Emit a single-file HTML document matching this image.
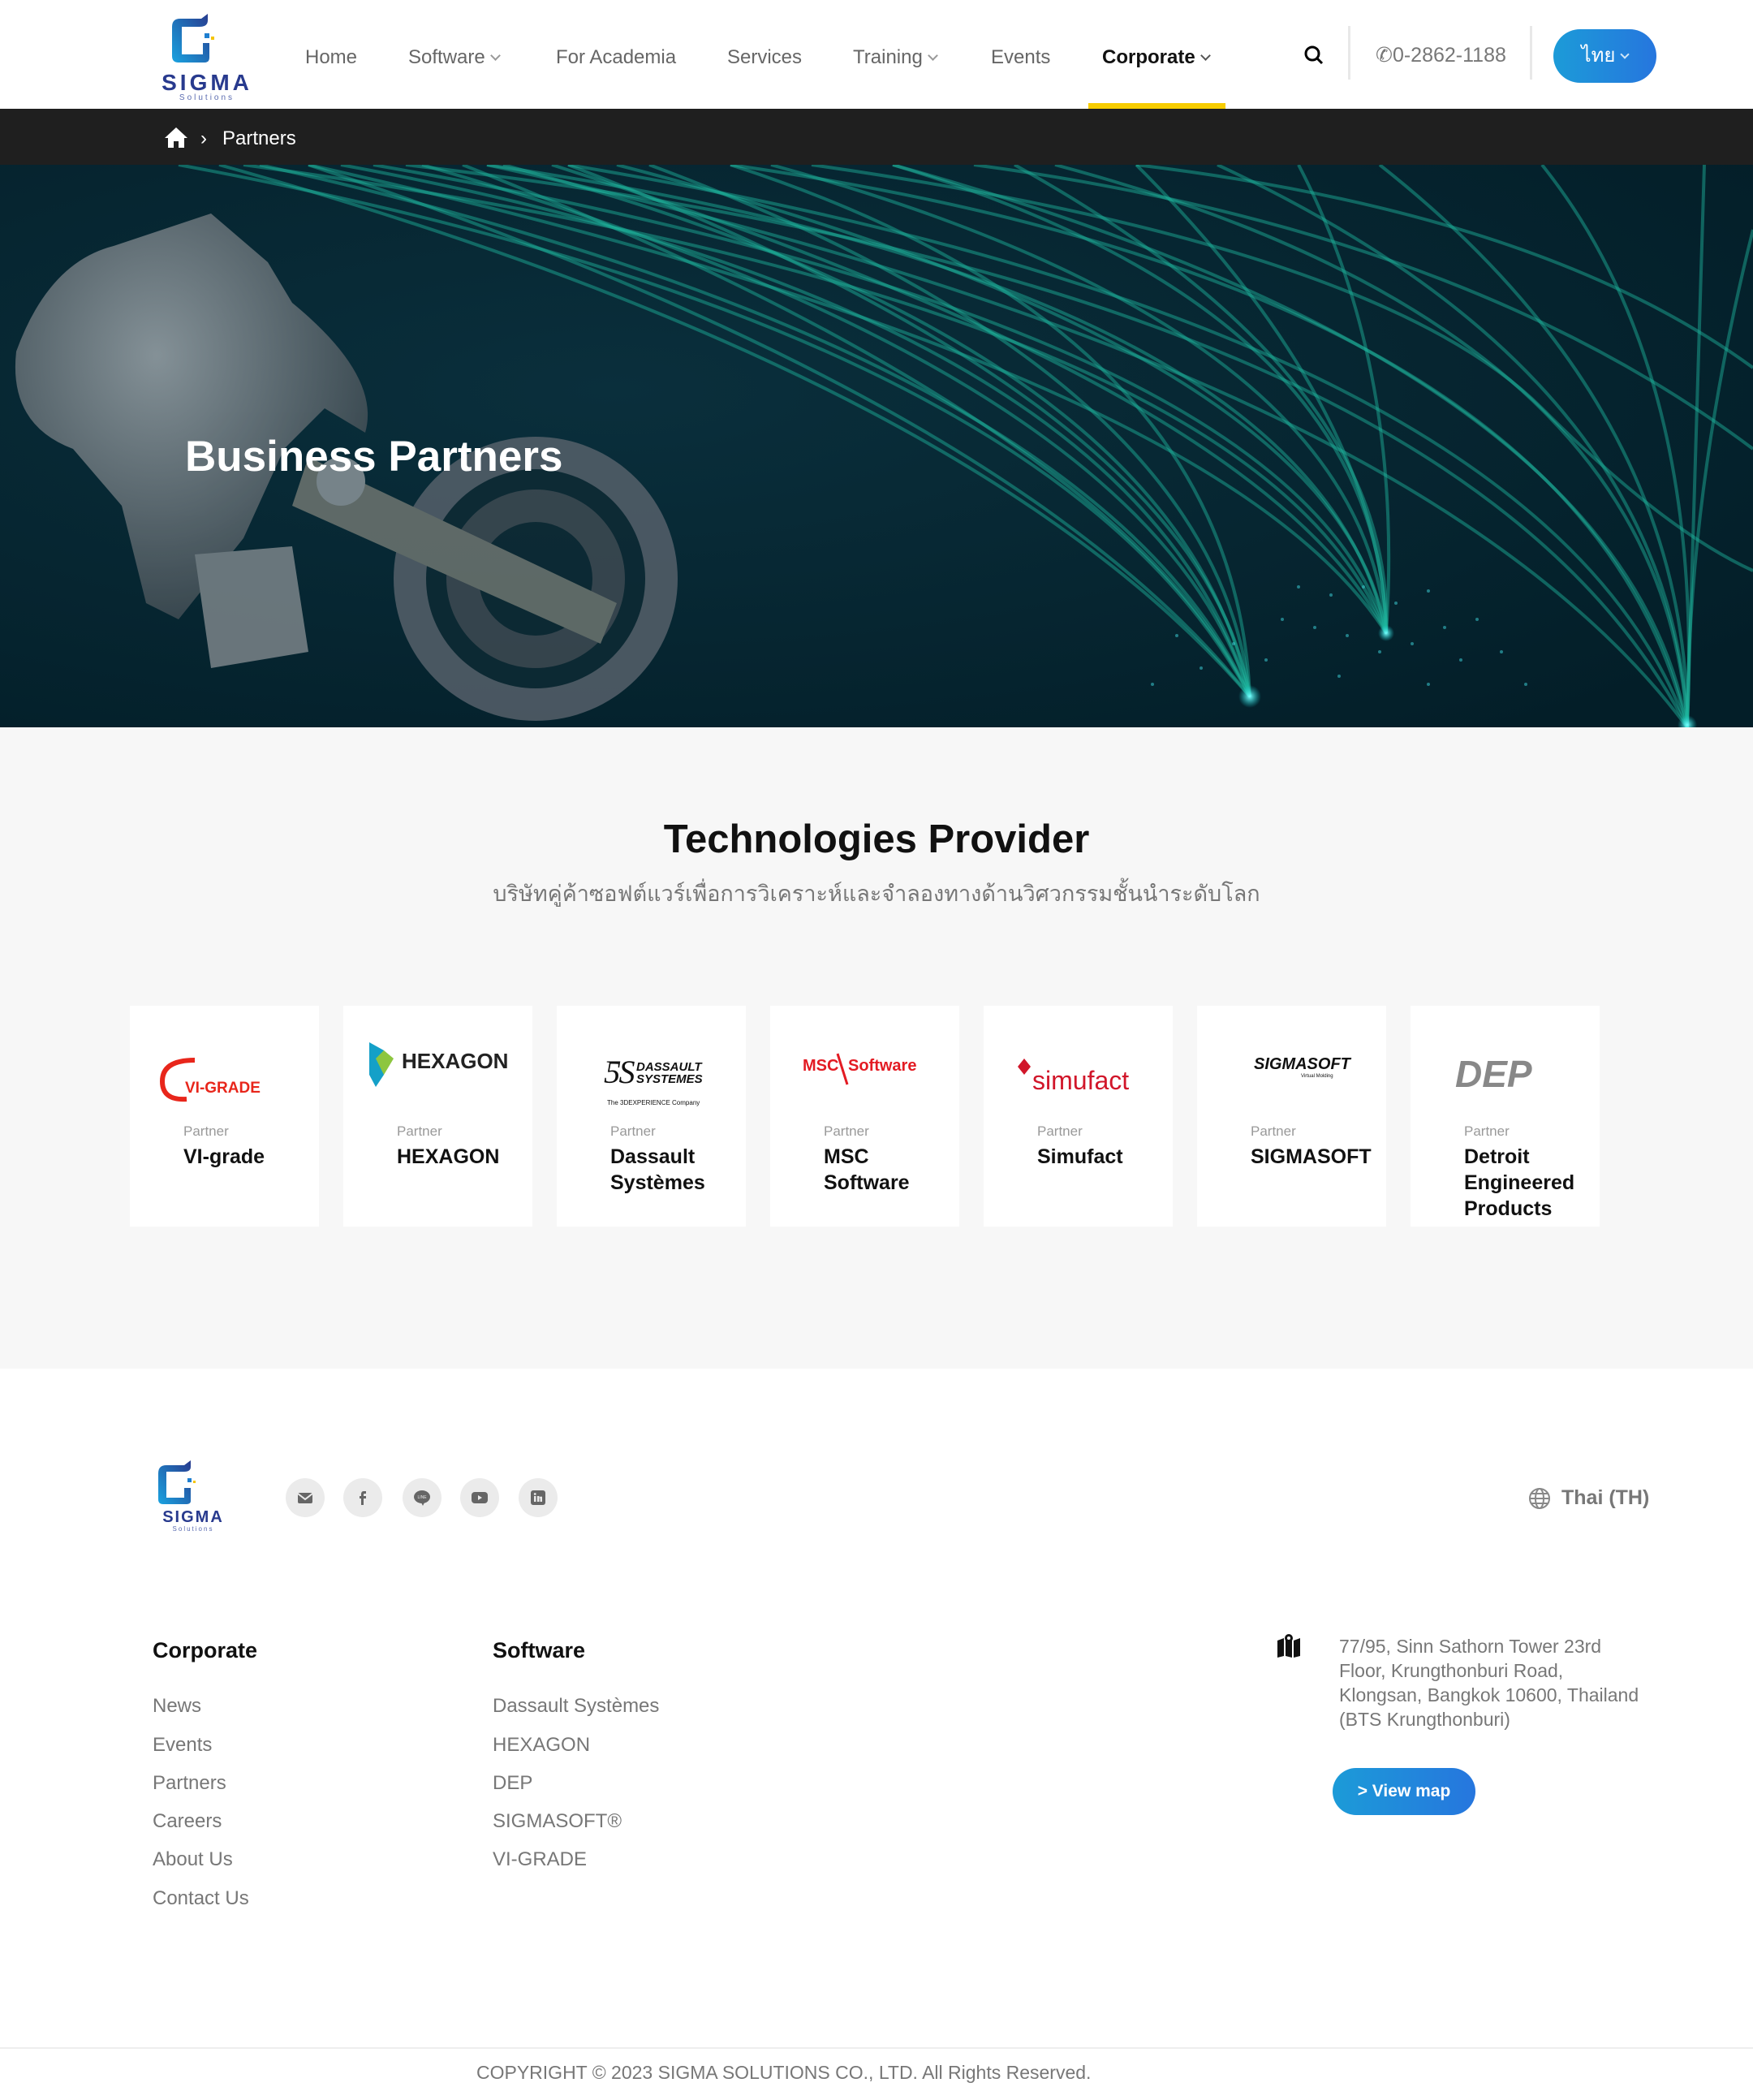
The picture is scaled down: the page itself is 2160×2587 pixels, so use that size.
<!DOCTYPE html>
<html><head><meta charset="utf-8">
<style>
*{margin:0;padding:0;box-sizing:border-box}
body{width:2160px;height:2587px;position:relative;background:#fff;font-family:"Liberation Sans","Noto Sans CJK SC",sans-serif;overflow:hidden}
.a{position:absolute;white-space:nowrap}
.nav{font-size:24px;color:#666;top:57px}
.chev{display:inline-block;width:9px;height:9px;border-right:2px solid #999;border-bottom:2px solid #999;transform:rotate(45deg);margin-left:8px;position:relative;top:-5px}
.card{position:absolute;top:1239px;width:233px;height:272px;background:#fff}
.card .p{position:absolute;left:66px;top:145px;font-size:17px;color:#999}
.card .n{position:absolute;left:66px;top:170px;font-size:25px;font-weight:bold;color:#111;line-height:32px;white-space:normal;width:160px}
.card .lg{position:absolute;left:20px;top:45px;width:200px;height:90px}
.fl{font-size:24px;color:#777}
.soc{position:absolute;top:1821px;width:48px;height:48px;border-radius:50%;background:#ebebeb}
.soc svg{position:absolute;left:12px;top:12px}
</style></head><body>

<svg class="a" style="left:195px;top:15px" width="120" height="110" viewBox="0 0 120 110">
<defs><linearGradient id="lg1" x1="0" y1="1" x2="1" y2="0"><stop offset="0" stop-color="#1aa3e0"/><stop offset="1" stop-color="#283a8e"/></linearGradient></defs>
<path d="M17 18 Q17 8 27 8 L53 8 L61 2 L61 10 Q61 18 51 18 L29 18 L29 52 L55 52 L55 38 L63 38 L63 56 Q63 62 57 62 L25 62 Q17 62 17 54 Z" fill="url(#lg1)"/>
<rect x="57" y="26" width="6" height="6" fill="#1f7fd0"/><rect x="65" y="30" width="4" height="4" fill="#f5c400"/>
<text x="60" y="96" text-anchor="middle" font-size="28" font-weight="bold" fill="#283a8e" font-family="Liberation Sans" letter-spacing="4">SIGMA</text>
<text x="60" y="108" text-anchor="middle" font-size="10" fill="#5a6bb0" font-family="Liberation Sans" letter-spacing="3">Solutions</text>
</svg>
<div class="a nav" style="left:376px">Home</div>
<div class="a nav" style="left:503px">Software<span class="chev"></span></div>
<div class="a nav" style="left:685px">For Academia</div>
<div class="a nav" style="left:896px">Services</div>
<div class="a nav" style="left:1051px">Training<span class="chev"></span></div>
<div class="a nav" style="left:1221px">Events</div>
<div class="a nav" style="left:1358px;color:#111;font-weight:bold">Corporate<span class="chev" style="border-color:#555"></span></div>
<div class="a" style="left:1341px;top:127px;width:169px;height:7px;background:#f7cd00"></div>
<svg class="a" style="left:1606px;top:55px" width="26" height="26" viewBox="0 0 26 26"><circle cx="11" cy="11" r="8" stroke="#000" stroke-width="3" fill="none"/><path d="M17 17 L23 23" stroke="#000" stroke-width="3"/></svg>
<div class="a" style="left:1661px;top:32px;width:3px;height:66px;background:#e8e8e8"></div>
<div class="a" style="left:1695px;top:53px;font-size:25px;color:#777">&#9990;0-2862-1188</div>
<div class="a" style="left:1885px;top:32px;width:3px;height:66px;background:#e8e8e8"></div>
<div class="a" style="left:1914px;top:36px;width:127px;height:66px;border-radius:33px;background:linear-gradient(90deg,#1c9bd8,#2676de);color:#fff;font-size:24px;text-align:center;line-height:66px">ไทย<span class="chev" style="border-color:#cfe6f8;width:8px;height:8px"></span></div>

<div class="a" style="left:0;top:134px;width:2160px;height:69px;background:#1f1f1f"></div>
<svg class="a" style="left:201px;top:155px" width="32" height="28" viewBox="0 0 32 28"><path d="M16 2 L30 15 L26 15 L26 27 L19 27 L19 19 L13 19 L13 27 L6 27 L6 15 L2 15 Z" fill="#fff"/></svg>
<div class="a" style="left:247px;top:157px;font-size:24px;color:#fff">&#8250;</div>
<div class="a" style="left:274px;top:157px;font-size:24px;color:#fff">Partners</div>

<svg class="a" style="left:0;top:203px" width="2160" height="693" viewBox="0 0 2160 693">
<defs>
<radialGradient id="bg" cx="0.35" cy="0.4" r="0.8"><stop offset="0" stop-color="#0a2f3c"/><stop offset="1" stop-color="#031e28"/></radialGradient>
<radialGradient id="glow" cx="0.5" cy="0.5" r="0.5"><stop offset="0" stop-color="#7ff"/><stop offset="1" stop-color="#1cc" stop-opacity="0"/></radialGradient>
<radialGradient id="met" cx="0.4" cy="0.35" r="0.7"><stop offset="0" stop-color="#9aa3a8"/><stop offset="1" stop-color="#3b474e"/></radialGradient>
</defs>
<rect width="2160" height="693" fill="url(#bg)"/>
<g fill="none" stroke="#1fb8a0" stroke-opacity="0.45" stroke-width="4">
<path d="M220 0 Q1300 200 1540 655"/><path d="M320 0 Q1350 230 1540 655"/><path d="M420 0 Q1400 180 1540 655"/><path d="M520 0 Q1420 260 1540 655"/><path d="M620 0 Q1450 220 1540 655"/><path d="M700 0 Q1480 300 1540 655"/><path d="M800 0 Q1500 260 1540 655"/><path d="M380 0 Q1250 290 1540 655"/><path d="M900 0 Q1520 200 1540 655"/><path d="M270 0 Q1200 260 1540 655"/><path d="M570 0 Q1380 320 1540 655"/>
<path d="M300 0 Q1550 170 1708 577"/><path d="M460 0 Q1600 200 1708 577"/><path d="M600 0 Q1620 150 1708 577"/><path d="M760 0 Q1650 230 1708 577"/><path d="M950 0 Q1680 200 1708 577"/><path d="M1100 0 Q1700 180 1708 577"/><path d="M1250 0 Q1720 260 1708 577"/><path d="M1400 0 Q1700 300 1708 577"/><path d="M1600 0 Q1730 250 1708 577"/><path d="M380 0 Q1500 250 1708 577"/><path d="M680 0 Q1560 280 1708 577"/>
<path d="M500 0 Q1800 150 2079 693"/><path d="M700 0 Q1900 200 2079 693"/><path d="M900 0 Q1950 150 2079 693"/><path d="M1100 0 Q2000 250 2079 693"/><path d="M1300 0 Q2050 200 2079 693"/><path d="M1500 0 Q2060 260 2079 693"/><path d="M1700 0 Q2080 300 2079 693"/><path d="M1900 0 Q2100 250 2079 693"/><path d="M2100 0 Q2090 350 2079 693"/><path d="M2160 80 Q2080 400 2079 693"/><path d="M600 0 Q1750 250 2079 693"/>
<path d="M1000 0 Q1700 100 1900 300 Q2050 450 2160 500"/><path d="M1200 0 Q1800 80 2160 350"/><path d="M1400 0 Q1900 60 2160 250"/>
</g>
<g fill="#3fd9e0" opacity="0.5">
<circle cx="1600" cy="520" r="2"/><circle cx="1640" cy="530" r="2"/><circle cx="1680" cy="520" r="2"/><circle cx="1720" cy="540" r="2"/><circle cx="1760" cy="525" r="2"/><circle cx="1580" cy="560" r="2"/><circle cx="1620" cy="570" r="2"/><circle cx="1660" cy="580" r="2"/><circle cx="1700" cy="600" r="2"/><circle cx="1740" cy="590" r="2"/><circle cx="1780" cy="570" r="2"/><circle cx="1820" cy="560" r="2"/><circle cx="1800" cy="610" r="2"/><circle cx="1560" cy="610" r="2"/><circle cx="1520" cy="590" r="2"/><circle cx="1480" cy="620" r="2"/><circle cx="1450" cy="580" r="2"/><circle cx="1850" cy="600" r="2"/><circle cx="1650" cy="630" r="2"/><circle cx="1760" cy="640" r="2"/><circle cx="1420" cy="640" r="2"/><circle cx="1880" cy="640" r="2"/>
</g>
<circle cx="1540" cy="655" r="14" fill="url(#glow)"/><circle cx="1708" cy="577" r="10" fill="url(#glow)"/><circle cx="2079" cy="690" r="12" fill="url(#glow)"/>
<g opacity="0.85">
<circle cx="660" cy="510" r="175" fill="#55606a"/><circle cx="660" cy="510" r="135" fill="#0e2a34"/><circle cx="660" cy="510" r="110" fill="#3e4a52"/><circle cx="660" cy="510" r="70" fill="#0e2a34"/>
<path d="M20 230 Q60 120 140 100 L260 60 L330 120 L360 170 Q470 260 450 330 L400 300 L350 350 L300 460 L220 560 L180 540 L150 420 L90 350 Q10 320 20 230 Z" fill="url(#met)"/>
<path d="M380 360 L760 540 L740 590 L360 420 Z" fill="#6d7570"/>
<path d="M240 480 L360 470 L380 600 L260 620 Z" fill="#7b8489"/>
<circle cx="420" cy="390" r="30" fill="#8a9398"/>
</g>
<text x="228" y="377" font-size="53" font-weight="bold" fill="#fff" font-family="Liberation Sans">Business Partners</text>
</svg>

<div class="a" style="left:0;top:896px;width:2160px;height:790px;background:#f7f7f7"></div>
<div class="a" style="left:0;width:2160px;top:1006px;text-align:center;font-size:49px;font-weight:bold;color:#111">Technologies Provider</div>
<div class="a" style="left:0;width:2160px;top:1079px;text-align:center;font-size:27px;color:#777;font-family:'Liberation Sans','Noto Sans CJK SC',sans-serif">บริษัทคู่ค้าซอฟต์แวร์เพื่อการวิเคราะห์และจำลองทางด้านวิศวกรรมชั้นนำระดับโลก</div>

<div class="card" style="left:160px"><svg class="lg" viewBox="0 0 200 90"><path d="M60 22 Q20 22 20 48 Q20 72 50 70" fill="none" stroke="#e8261b" stroke-width="6"/><text x="48" y="62" font-size="19" font-weight="bold" fill="#e8261b" font-family="Liberation Sans">VI-GRADE</text></svg><div class="p">Partner</div><div class="n">VI-grade</div></div>
<div class="card" style="left:423px"><svg class="lg" viewBox="0 0 200 90"><path d="M12 0 L30 10 L30 40 L20 55 L12 40 Z" fill="#14a0c8"/><path d="M20 20 L30 10 L42 20 L30 40 Z" fill="#8dc63f"/><text x="52" y="32" font-size="26" font-weight="bold" fill="#222" font-family="Liberation Sans">HEXAGON</text></svg><div class="p">Partner</div><div class="n">HEXAGON</div></div>
<div class="card" style="left:686px"><svg class="lg" viewBox="0 0 200 90"><text x="38" y="50" font-size="40" font-style="italic" fill="#111" font-family="Liberation Serif">ƼS</text><text x="78" y="35" font-size="15" font-weight="bold" font-style="italic" fill="#111">DASSAULT</text><text x="78" y="50" font-size="15" font-weight="bold" font-style="italic" fill="#111">SYSTEMES</text><text x="42" y="77" font-size="8" fill="#111">The 3DEXPERIENCE Company</text></svg><div class="p">Partner</div><div class="n">Dassault Systèmes</div></div>
<div class="card" style="left:949px"><svg class="lg" viewBox="0 0 200 90"><text x="20" y="35" font-size="20" font-weight="bold" fill="#e31b23" font-family="Liberation Sans">MSC</text><path d="M63 14 L75 52" stroke="#e31b23" stroke-width="3"/><text x="76" y="35" font-size="20" font-weight="bold" fill="#e31b23" font-family="Liberation Sans">Software</text></svg><div class="p">Partner</div><div class="n">MSC Software</div></div>
<div class="card" style="left:1212px"><svg class="lg" viewBox="0 0 200 90"><path d="M22 30 L30 20 L38 30 L30 40 Z" fill="#d1162a"/><text x="40" y="58" font-size="32" fill="#d1162a" font-family="Liberation Sans">simufact</text></svg><div class="p">Partner</div><div class="n">Simufact</div></div>
<div class="card" style="left:1475px"><svg class="lg" viewBox="0 0 200 90"><text x="50" y="33" font-size="20" font-weight="bold" font-style="italic" fill="#111" font-family="Liberation Sans">SIGMASOFT</text><text x="108" y="43" font-size="6" fill="#111">Virtual Molding</text></svg><div class="p">Partner</div><div class="n">SIGMASOFT</div></div>
<div class="card" style="left:1738px"><svg class="lg" viewBox="0 0 200 90"><text x="35" y="55" font-size="46" font-weight="bold" font-style="italic" fill="#888" font-family="Liberation Sans">DEP</text></svg><div class="p">Partner</div><div class="n">Detroit Engineered Products</div></div>

<svg class="a" style="left:183px;top:1797px" width="110" height="92" viewBox="0 0 110 92">
<path d="M12 18 Q12 8 22 8 L44 8 L52 2 L52 10 Q52 16 44 16 L22 16 L22 48 L44 48 L44 36 L52 36 L52 52 Q52 56 46 56 L18 56 Q12 56 12 50 Z" fill="url(#lg1)"/>
<rect x="48" y="24" width="5" height="5" fill="#1f7fd0"/><rect x="55" y="27" width="3" height="3" fill="#f5c400"/>
<text x="55" y="78" text-anchor="middle" font-size="20" font-weight="bold" fill="#283a8e" font-family="Liberation Sans" letter-spacing="2">SIGMA</text>
<text x="55" y="89" text-anchor="middle" font-size="8" fill="#5a6bb0" letter-spacing="2">Solutions</text>
</svg>
<div class="soc" style="left:352px"><svg width="24" height="24" viewBox="0 0 24 24"><rect x="3" y="6" width="18" height="13" rx="2" fill="#666"/><path d="M3 7 L12 14 L21 7" stroke="#ebebeb" stroke-width="2" fill="none"/></svg></div>
<div class="soc" style="left:423px"><svg width="24" height="24" viewBox="0 0 24 24"><path d="M13 21 L13 13 L16 13 L16 10 L13 10 L13 8 Q13 7 14 7 L16 7 L16 4 L13 4 Q10 4 10 8 L10 10 L8 10 L8 13 L10 13 L10 21 Z" fill="#666"/></svg></div>
<div class="soc" style="left:496px"><svg width="24" height="24" viewBox="0 0 24 24"><ellipse cx="12" cy="11" rx="10" ry="8" fill="#666"/><path d="M11 18 L13 22 L15 18Z" fill="#666"/><text x="12" y="13" text-anchor="middle" font-size="5" fill="#ebebeb">LINE</text></svg></div>
<div class="soc" style="left:567px"><svg width="24" height="24" viewBox="0 0 24 24"><rect x="2" y="5" width="20" height="14" rx="4" fill="#666"/><path d="M10 9 L15 12 L10 15Z" fill="#ebebeb"/></svg></div>
<div class="soc" style="left:639px"><svg width="24" height="24" viewBox="0 0 24 24"><rect x="3" y="3" width="18" height="18" rx="3" fill="#666"/><rect x="7" y="10" width="2.5" height="7" fill="#ebebeb"/><circle cx="8.2" cy="7.5" r="1.4" fill="#ebebeb"/><path d="M11 10 L13.5 10 L13.5 17 L11 17Z M13.5 12 Q15 9.5 17 11 L17 17 L14.5 17 L14.5 13" fill="#ebebeb"/></svg></div>
<svg class="a" style="left:1882px;top:1831px" width="30" height="30" viewBox="0 0 30 30"><circle cx="15" cy="15" r="12" fill="none" stroke="#888" stroke-width="2"/><ellipse cx="15" cy="15" rx="5" ry="12" fill="none" stroke="#888" stroke-width="2"/><path d="M3 15 L27 15 M5 9 L25 9 M5 21 L25 21" stroke="#888" stroke-width="2"/></svg>
<div class="a" style="left:1924px;top:1831px;font-size:25px;font-weight:bold;color:#777">Thai (TH)</div>

<div class="a" style="left:188px;top:2018px;font-size:27px;font-weight:bold;color:#111">Corporate</div>
<div class="a" style="left:607px;top:2018px;font-size:27px;font-weight:bold;color:#111">Software</div>
<div class="a fl" style="left:188px;top:2088px">News</div>
<div class="a fl" style="left:188px;top:2136px">Events</div>
<div class="a fl" style="left:188px;top:2183px">Partners</div>
<div class="a fl" style="left:188px;top:2230px">Careers</div>
<div class="a fl" style="left:188px;top:2277px">About Us</div>
<div class="a fl" style="left:188px;top:2325px">Contact Us</div>
<div class="a fl" style="left:607px;top:2088px">Dassault Systèmes</div>
<div class="a fl" style="left:607px;top:2136px">HEXAGON</div>
<div class="a fl" style="left:607px;top:2183px">DEP</div>
<div class="a fl" style="left:607px;top:2230px">SIGMASOFT®</div>
<div class="a fl" style="left:607px;top:2277px">VI-GRADE</div>
<svg class="a" style="left:1572px;top:2011px" width="32" height="32" viewBox="0 0 32 32"><path d="M2 10 L10 7 L10 29 L2 31Z M12 7 L20 10 L20 31 L12 29Z M22 10 L30 7 L30 29 L22 31Z" fill="#111"/><circle cx="16" cy="7" r="5" fill="#111"/><circle cx="16" cy="7" r="2" fill="#fff"/></svg>
<div class="a" style="left:1650px;top:2013px;font-size:23px;color:#777;line-height:30px">77/95, Sinn Sathorn Tower 23rd<br>Floor, Krungthonburi Road,<br>Klongsan, Bangkok 10600, Thailand<br>(BTS Krungthonburi)</div>
<div class="a" style="left:1642px;top:2178px;width:176px;height:58px;border-radius:29px;background:linear-gradient(90deg,#1c9bd8,#2676de);color:#fff;font-size:21px;font-weight:bold;text-align:center;line-height:58px">&gt; View map</div>

<div class="a" style="left:0;top:2522px;width:2160px;height:2px;background:#eee"></div>
<div class="a" style="left:587px;top:2540px;font-size:23px;color:#777">COPYRIGHT © 2023 SIGMA SOLUTIONS CO., LTD. All Rights Reserved.</div>
</body></html>
